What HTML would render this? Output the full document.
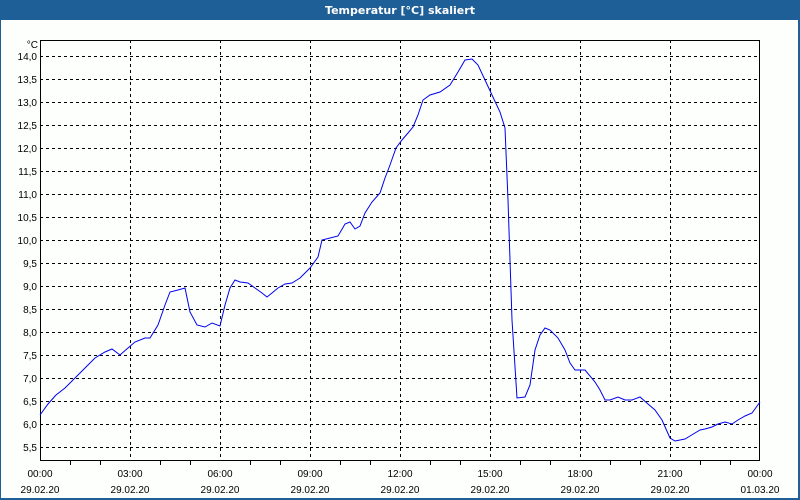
<!DOCTYPE html><html><head><style>
body{margin:0;width:800px;height:500px;overflow:hidden;background:#fff;font-family:"Liberation Sans",sans-serif}
</style></head><body>
<svg width="800" height="500" xmlns="http://www.w3.org/2000/svg" style="position:absolute;left:0;top:0">
<rect x="0" y="0" width="800" height="500" fill="#1f5f97"/>
<rect x="1" y="20" width="797" height="478" fill="#fdfffd"/>
<text x="400" y="14" fill="#fff" font-size="11" font-weight="bold" text-anchor="middle" font-family="DejaVu Sans,sans-serif">Temperatur [°C] skaliert</text>
<g stroke="#000" stroke-width="1" stroke-dasharray="3,3" shape-rendering="crispEdges">
<line x1="40" y1="56.5" x2="760" y2="56.5"/><line x1="40" y1="79.5" x2="760" y2="79.5"/><line x1="40" y1="102.5" x2="760" y2="102.5"/><line x1="40" y1="125.5" x2="760" y2="125.5"/><line x1="40" y1="148.5" x2="760" y2="148.5"/><line x1="40" y1="171.5" x2="760" y2="171.5"/><line x1="40" y1="194.5" x2="760" y2="194.5"/><line x1="40" y1="217.5" x2="760" y2="217.5"/><line x1="40" y1="240.5" x2="760" y2="240.5"/><line x1="40" y1="263.5" x2="760" y2="263.5"/><line x1="40" y1="286.5" x2="760" y2="286.5"/><line x1="40" y1="309.5" x2="760" y2="309.5"/><line x1="40" y1="332.5" x2="760" y2="332.5"/><line x1="40" y1="355.5" x2="760" y2="355.5"/><line x1="40" y1="378.5" x2="760" y2="378.5"/><line x1="40" y1="401.5" x2="760" y2="401.5"/><line x1="40" y1="424.5" x2="760" y2="424.5"/><line x1="40" y1="447.5" x2="760" y2="447.5"/>
<line x1="130.5" y1="40" x2="130.5" y2="461"/><line x1="220.5" y1="40" x2="220.5" y2="461"/><line x1="310.5" y1="40" x2="310.5" y2="461"/><line x1="400.5" y1="40" x2="400.5" y2="461"/><line x1="490.5" y1="40" x2="490.5" y2="461"/><line x1="580.5" y1="40" x2="580.5" y2="461"/><line x1="670.5" y1="40" x2="670.5" y2="461"/>
</g>
<rect x="40.5" y="40.5" width="719" height="420" fill="none" stroke="#000" shape-rendering="crispEdges"/>
<g stroke="#000" shape-rendering="crispEdges">
<line x1="70.5" y1="461" x2="70.5" y2="465"/><line x1="100.5" y1="461" x2="100.5" y2="465"/><line x1="160.5" y1="461" x2="160.5" y2="465"/><line x1="190.5" y1="461" x2="190.5" y2="465"/><line x1="250.5" y1="461" x2="250.5" y2="465"/><line x1="280.5" y1="461" x2="280.5" y2="465"/><line x1="340.5" y1="461" x2="340.5" y2="465"/><line x1="370.5" y1="461" x2="370.5" y2="465"/><line x1="430.5" y1="461" x2="430.5" y2="465"/><line x1="460.5" y1="461" x2="460.5" y2="465"/><line x1="520.5" y1="461" x2="520.5" y2="465"/><line x1="550.5" y1="461" x2="550.5" y2="465"/><line x1="610.5" y1="461" x2="610.5" y2="465"/><line x1="640.5" y1="461" x2="640.5" y2="465"/><line x1="700.5" y1="461" x2="700.5" y2="465"/><line x1="730.5" y1="461" x2="730.5" y2="465"/>
</g>
<polyline fill="none" stroke="#0000ee" stroke-width="1" points="40,415 48,404 56,395 65,388 75,378 85,368 95,358 105,352 112,349 120,355 128,348 135,342 145,338 150,338 158,325 165,305 170,292 178,290 185,288 190,312 197,325 205,327 212,323 220,326 225,305 230,288 235,280 240,282 248,283 255,288 262,293 267,297 272,293 278,288 285,284 292,283 300,278 310,268 318,257 322,240 330,238 338,236 345,224 350,222 355,229 360,226 365,213 372,202 380,193 385,178 390,165 396,148 402,140 408,133 413,127 418,115 423,100 430,95 440,92 450,85 458,72 465,60 472,59 478,65 485,80 492,95 500,112 505,128 508,200 512,320 517,398 525,397 530,385 535,350 540,335 545,328 550,330 558,338 565,350 570,363 575,370 585,370 595,382 600,390 605,400 610,400 618,397 625,400 632,400 640,397 648,404 655,410 662,420 670,438 675,441 685,439 690,436 700,430 705,429 712,427 718,424 725,422 732,424 738,420 745,416 752,413 760,402"/>
<g font-size="10" fill="#000" text-anchor="end" font-family="Liberation Sans,sans-serif">
<text x="38" y="48">°C</text>
<text x="37" y="60">14,0</text><text x="37" y="83">13,5</text><text x="37" y="106">13,0</text><text x="37" y="129">12,5</text><text x="37" y="152">12,0</text><text x="37" y="175">11,5</text><text x="37" y="198">11,0</text><text x="37" y="221">10,5</text><text x="37" y="244">10,0</text><text x="37" y="267">9,5</text><text x="37" y="290">9,0</text><text x="37" y="313">8,5</text><text x="37" y="336">8,0</text><text x="37" y="359">7,5</text><text x="37" y="382">7,0</text><text x="37" y="405">6,5</text><text x="37" y="428">6,0</text><text x="37" y="451">5,5</text>
</g>
<g font-size="10" fill="#000" text-anchor="middle" font-family="Liberation Sans,sans-serif">
<text x="40" y="477">00:00</text><text x="130" y="477">03:00</text><text x="220" y="477">06:00</text><text x="310" y="477">09:00</text><text x="400" y="477">12:00</text><text x="490" y="477">15:00</text><text x="580" y="477">18:00</text><text x="670" y="477">21:00</text><text x="760" y="477">00:00</text>
<text x="40" y="493">29.02.20</text><text x="130" y="493">29.02.20</text><text x="220" y="493">29.02.20</text><text x="310" y="493">29.02.20</text><text x="400" y="493">29.02.20</text><text x="490" y="493">29.02.20</text><text x="580" y="493">29.02.20</text><text x="670" y="493">29.02.20</text><text x="760" y="493">01.03.20</text>
</g>
</svg>
</body></html>
